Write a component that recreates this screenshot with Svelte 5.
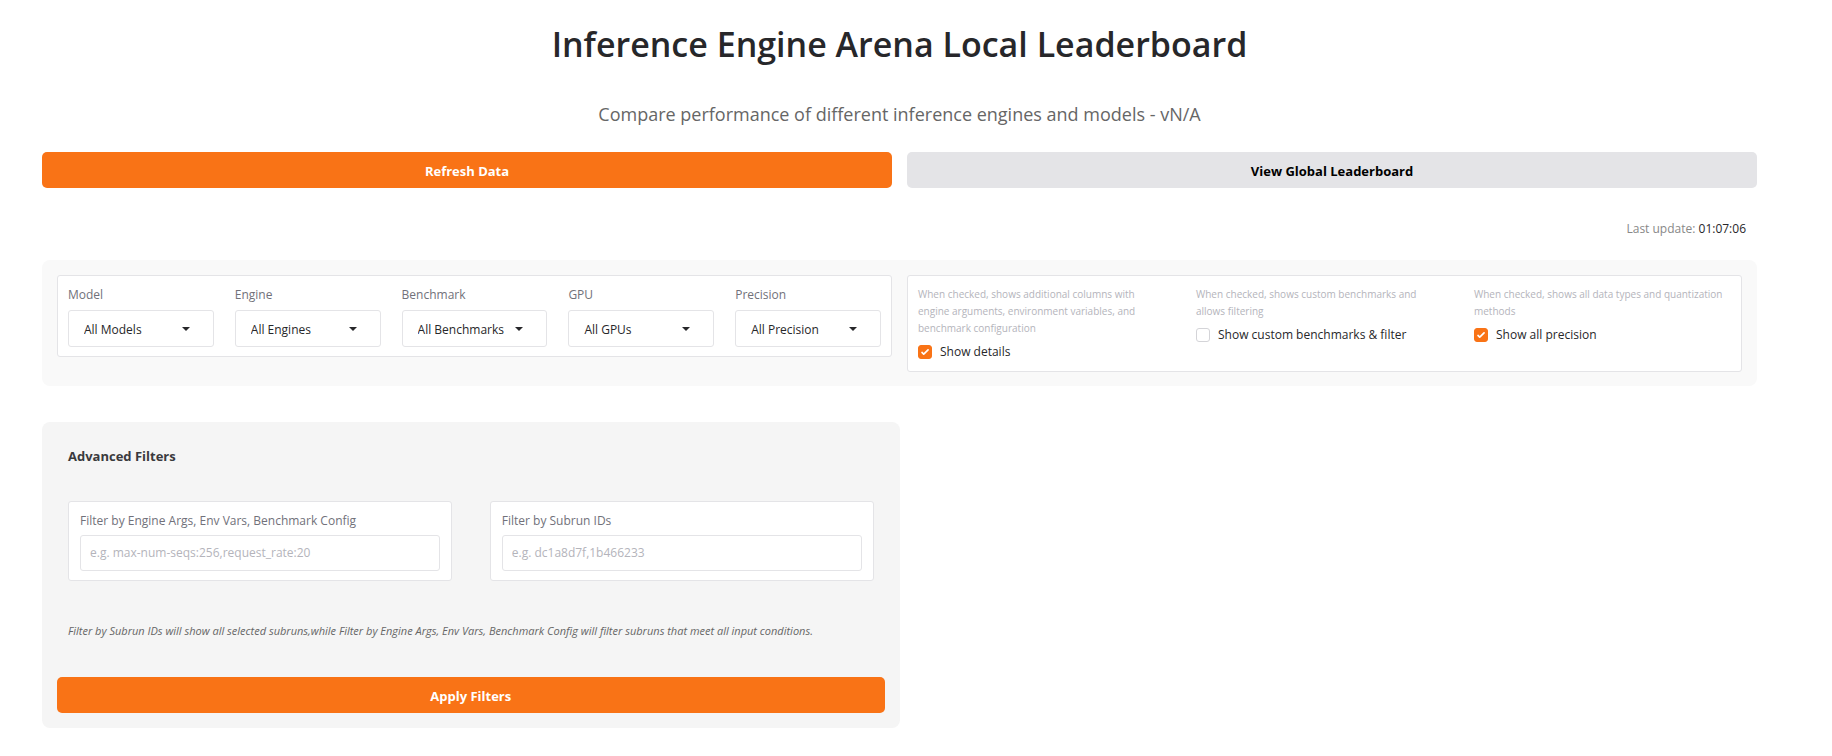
<script>
  const filters = [
    { id: 'model', label: 'Model', value: 'All Models' },
    { id: 'engine', label: 'Engine', value: 'All Engines' },
    { id: 'benchmark', label: 'Benchmark', value: 'All Benchmarks' },
    { id: 'gpu', label: 'GPU', value: 'All GPUs' },
    { id: 'precision', label: 'Precision', value: 'All Precision' }
  ];

  let toggles = $state([
    {
      id: 'details',
      label: 'Show details',
      info: 'When checked, shows additional columns with\nengine arguments, environment variables, and\nbenchmark configuration',
      checked: true
    },
    {
      id: 'custom',
      label: 'Show custom benchmarks & filter',
      info: 'When checked, shows custom benchmarks and\nallows filtering',
      checked: false
    },
    {
      id: 'all-precision',
      label: 'Show all precision',
      info: 'When checked, shows all data types and quantization\nmethods',
      checked: true
    }
  ]);

  const searches = [
    { id: 'args', label: 'Filter by Engine Args, Env Vars, Benchmark Config', hint: 'e.g. max-num-seqs:256,request_rate:20' },
    { id: 'subruns', label: 'Filter by Subrun IDs', hint: 'e.g. dc1a8d7f,1b466233' }
  ];
</script>

<main>
  <header>
    <h1>Inference Engine Arena Local Leaderboard</h1>
    <p>Compare performance of different inference engines and models - vN/A</p>
  </header>

  <div class="actions">
    <button class="primary" type="button">Refresh Data</button>
    <button class="secondary" type="button">View Global Leaderboard</button>
  </div>

  <p class="updated">Last update: <span>01:07:06</span></p>

  <section class="controls">
    <div class="box selects">
      {#each filters as f (f.id)}
        <div class="field">
          <label for={f.id}>{f.label}</label>
          <div class="select">
            <select id={f.id}><option>{f.value}</option></select>
            <svg viewBox="0 0 8 4" width="8" height="4" aria-hidden="true"><path d="M0 0h8L4 4z" /></svg>
          </div>
        </div>
      {/each}
    </div>
    <div class="box toggles">
      {#each toggles as t (t.id)}
        <div class="toggle">
          <p id="{t.id}-info">{t.info}</p>
          <label>
            <input type="checkbox" bind:checked={t.checked} aria-describedby="{t.id}-info" />
            <svg viewBox="0 0 16 16" width="14" height="14" aria-hidden="true">
              <path d="M12.2 4.8a1 1 0 0 1 0 1.4l-5 5a1 1 0 0 1-1.4 0l-2-2a1 1 0 0 1 1.4-1.4L6.5 9.1l4.3-4.3a1 1 0 0 1 1.4 0z" />
            </svg>
            <span>{t.label}</span>
          </label>
        </div>
      {/each}
    </div>
  </section>

  <section class="advanced">
    <h2>Advanced Filters</h2>
    <div class="searches">
      {#each searches as s (s.id)}
        <div class="box search">
          <label for={s.id}>{s.label}</label>
          <input id={s.id} type="text" placeholder={s.hint} />
        </div>
      {/each}
    </div>
    <p class="note">Filter by Subrun IDs will show all selected subruns,while Filter by Engine Args, Env Vars, Benchmark Config will filter subruns that meet all input conditions.</p>
    <button class="primary" type="button">Apply Filters</button>
  </section>
</main>

<style>
  :global(body) {
    margin: 0;
    background: #fff;
  }

  main {
    padding: 20px 75px 28px 42px;
    font-family: 'Open Sans', 'Noto Sans', sans-serif;
    font-size: 12px;
    line-height: 20px;
    color: #27272a;
  }

  main * {
    box-sizing: border-box;
  }

  h1,
  h2,
  p {
    margin: 0;
  }

  header {
    text-align: center;
  }

  h1 {
    font-size: 34px;
    line-height: 48px;
    font-weight: 600;
  }

  header p {
    margin-top: 32px;
    font-size: 18px;
    line-height: 28px;
    color: #666;
  }

  button,
  input,
  select {
    font: inherit;
    color: inherit;
  }

  button {
    height: 36px;
    padding: 1px 12px 0;
    border: 0;
    border-radius: 5px;
    font-size: 13px;
    font-weight: 700;
    cursor: pointer;
  }

  .primary {
    background: #f97316;
    color: #fff;
  }

  .secondary {
    background: #e4e4e7;
    color: #000;
  }

  .actions {
    display: grid;
    grid-template-columns: 1fr 1fr;
    gap: 15px;
    margin-top: 24px;
  }

  .updated {
    margin-top: 31px;
    padding-right: 11px;
    text-align: right;
    color: #888;
  }

  .updated span {
    color: #27272a;
  }

  .box {
    background: #fff;
    border: 1px solid #e4e4e7;
    border-radius: 3px;
  }

  .controls {
    display: grid;
    grid-template-columns: 1fr 1fr;
    align-items: start;
    gap: 15px;
    margin-top: 21px;
    padding: 15px 15px 14px;
    background: #f9f9f9;
    border-radius: 8px;
  }

  .selects {
    display: grid;
    grid-template-columns: repeat(5, 1fr);
    gap: 21px;
    padding: 9px 10px;
  }

  .field,
  .search {
    display: flex;
    flex-direction: column;
  }

  .field label,
  .search label {
    color: #71717a;
  }

  .field {
    gap: 5px;
  }

  .select {
    display: grid;
    align-items: center;
  }

  .select > * {
    grid-area: 1 / 1;
  }

  select {
    appearance: none;
    width: 100%;
    height: 37px;
    padding: 2px 32px 0 15px;
    background: #fff;
    border: 1px solid #e4e4e7;
    border-radius: 3px;
  }

  .select svg {
    justify-self: end;
    margin-right: 24px;
    fill: #27272a;
    pointer-events: none;
  }

  .toggles {
    display: grid;
    grid-template-columns: repeat(3, 1fr);
    gap: 21px;
    padding: 10px 10px 9px;
  }

  .toggle p {
    font-size: 10px;
    line-height: 17px;
    white-space: pre-line;
    color: #b4b4bb;
  }

  .toggle label {
    display: grid;
    grid-template-columns: 14px 1fr;
    align-items: center;
    column-gap: 8px;
    margin-top: 5px;
  }

  .toggle input {
    grid-area: 1 / 1;
    appearance: none;
    width: 14px;
    height: 14px;
    margin: 0;
    background: #fff;
    border: 1px solid #d4d4d8;
    border-radius: 3px;
  }

  .toggle input:checked {
    background: #f97316;
    border-color: #f97316;
  }

  .toggle svg {
    grid-area: 1 / 1;
    fill: #fff;
    pointer-events: none;
  }

  .advanced {
    display: flex;
    flex-direction: column;
    width: 50%;
    margin-top: 36px;
    padding: 24px 15px 15px;
    background: #f5f5f5;
    border-radius: 8px;
  }

  h2 {
    padding: 0 11px;
    font-size: 13px;
    line-height: 20px;
    font-weight: 700;
    color: #3a3a3d;
  }

  .searches {
    display: grid;
    grid-template-columns: 1fr 1fr;
    gap: 38px;
    margin-top: 35px;
    padding: 0 11px;
  }

  .search {
    gap: 4px;
    padding: 9px 11px;
  }

  .search input {
    width: 100%;
    height: 36px;
    padding: 0 9px 2px;
    background: #fff;
    border: 1px solid #e4e4e7;
    border-radius: 3px;
  }

  .search input::placeholder {
    color: #b4b4bb;
    opacity: 1;
  }

  .note {
    margin: 40px 0 36px;
    padding: 0 11px;
    font-size: 11px;
    font-style: italic;
    color: #666;
  }
</style>
